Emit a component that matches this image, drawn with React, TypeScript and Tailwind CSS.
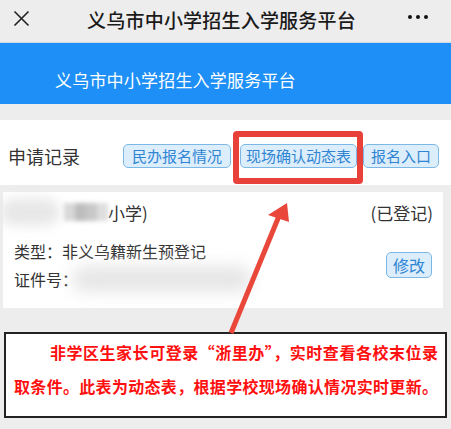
const cjk = '"Noto Sans CJK SC", "Noto Sans", sans-serif';

const Pill = ({ label, className = "" }: { label: string; className?: string }): JSX.Element => (
    <span
        className={`flex items-center h-[24px] rounded-[5px] border border-[#7cb8e6] bg-[#dcedfb] text-[15px] leading-none text-[#2f85d3] ${className}`}
    >
        {label}
    </span>
);

const App = (): JSX.Element => {
    return (
        <div
            className="relative w-[451px] h-[429px] overflow-hidden bg-[#ededed]"
            style={{ fontFamily: cjk }}
        >
            {/* top bar */}
            <div className="relative flex items-center justify-center h-[43px] pr-[8px] border-b border-[#cfd8e3] text-[#1a1a1a]">
                <svg className="absolute left-[13px] top-[10px]" width="17" height="17" viewBox="0 0 17 17">
                    <path d="M1.5 1.5 L15.5 15.5 M15.5 1.5 L1.5 15.5" stroke="#222" strokeWidth="1.6" />
                </svg>
                <span className="text-[19px] font-medium leading-none -mt-[4px] tracking-[0.2px]">义乌市中小学招生入学服务平台</span>
                <div className="absolute right-[23px] top-[15px] flex gap-[4px]">
                    <span className="w-[4px] h-[4px] rounded-full bg-[#111]" />
                    <span className="w-[4px] h-[4px] rounded-full bg-[#111]" />
                    <span className="w-[4px] h-[4px] rounded-full bg-[#111]" />
                </div>
            </div>

            {/* banner */}
            <div className="flex items-center h-[61px] pl-[55px] bg-[#1d8ff6] text-white text-[17px] leading-none pt-[12px] tracking-[0.2px]">
                义乌市中小学招生入学服务平台
            </div>

            {/* records header */}
            <div className="flex items-center justify-between h-[65px] mt-[16px] bg-white pl-[8px] pr-[12px] pt-[6px]">
                <span className="text-[18px] text-[#333] leading-none">申请记录</span>
                <div className="flex items-center">
                    <Pill label="民办报名情况" className="px-[8px]" />
                    <Pill label="现场确认动态表" className="px-[5px] ml-[9px]" />
                    <Pill label="报名入口" className="px-[7px] ml-[6px]" />
                </div>
            </div>

            {/* card */}
            <div className="mt-[7px] mx-[3px] w-[440px] h-[116px] bg-white px-[11px] pt-[7px] text-[#333]">
                <div className="flex items-center justify-between h-[26px]">
                    <div className="flex items-center text-[17px] leading-none">
                        <span className="w-[60px] h-[28px] -ml-[14px] rounded-full bg-[#e8e8e8] blur-[6px]" />
                        <span className="flex w-[44px] h-[18px] ml-[4px] blur-[2px]">
                            <span className="w-[11px] bg-[#d8d8d8]" />
                            <span className="w-[11px] bg-[#bdbdbd]" />
                            <span className="w-[11px] bg-[#c8c8c8]" />
                            <span className="w-[11px] bg-[#dedede]" />
                        </span>
                        <span>小学)</span>
                    </div>
                    <span className="text-[17px] leading-none -mr-[1px]">(已登记)</span>
                </div>
                <div className="flex items-start justify-between mt-[18px]">
                    <div className="flex flex-col gap-[12px] text-[16px] leading-none">
                        <span>类型：非义乌籍新生预登记</span>
                        <div className="flex items-center h-[16px]">
                            <span>证件号：</span>
                            <span className="w-[180px] h-[26px] -ml-[6px] rounded-full bg-[#e6e6e6] blur-[8px]" />
                        </div>
                    </div>
                    <Pill label="修改" className="h-[26px] px-[6px] mt-[9px] text-[16px]" />
                </div>
            </div>

            {/* notice */}
            <div className="flex flex-col gap-[18px] mt-[24px] mx-[4px] w-[443px] h-[86px] border-2 border-[#222] bg-white pl-[8px] pr-[7px] pt-[10px] text-[16px] leading-none font-bold text-[#ff1010]">
                <p className="pl-[36px] text-justify [text-align-last:justify]">
                    非学区生家长可登录“浙里办”，实时查看各校末位录
                </p>
                <p className="text-justify [text-align-last:justify]">
                    取条件。此表为动态表，根据学校现场确认情况实时更新。
                </p>
            </div>

            {/* annotation: highlight box */}
            <div className="absolute left-[233px] top-[131px] w-[130px] h-[53px] border-[6px] border-[#e8413a] rounded-[4px]" />

            {/* annotation: arrow */}
            <svg className="absolute left-0 top-0" width="451" height="429" viewBox="0 0 451 429">
                <line x1="231" y1="333" x2="279" y2="216" stroke="#e8473a" strokeWidth="5" />
                <polygon points="287,203 268,215 289,222" fill="#e8473a" />
            </svg>
        </div>
    );
};

export default App;
